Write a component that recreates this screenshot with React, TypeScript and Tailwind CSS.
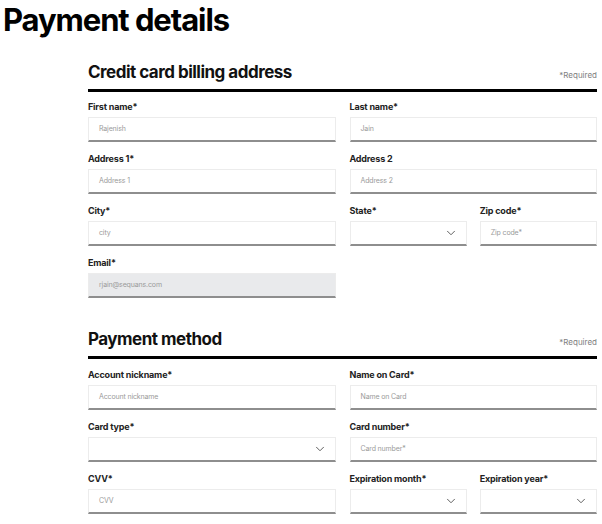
import { ChevronDown } from 'lucide-react'

type Field = {
  label: string
  placeholder?: string
  select?: boolean
  filled?: boolean
}

function FieldBox({ label, placeholder, select, filled }: Field) {
  return (
    <div className="flex flex-col">
      <label className="text-[9px] leading-[12px] font-bold text-[#222] tracking-[-0.02em]">{label}</label>
      <div
        className={
          'mt-[4px] h-[25px] flex items-center justify-between px-[10px] border border-[#ececec] border-b-[2px] border-b-[#8e8e8e] ' +
          (filled ? 'bg-[#e9eaec]' : 'bg-white')
        }
      >
        <span className="text-[7px] text-[#9a9a9a] tracking-[-0.02em]">{placeholder}</span>
        {select && <ChevronDown className="w-[14px] h-[14px] text-[#555] -mr-[2px]" strokeWidth={1.6} />}
      </div>
    </div>
  )
}

function SectionHeader({ title }: { title: string }) {
  return (
    <div className="flex items-end justify-between border-b-[3px] border-black pb-[7px]">
      <h2 className="text-[17px] leading-[20px] font-bold text-[#111] tracking-[-0.03em]">{title}</h2>
      <span className="text-[8px] leading-[10px] text-[#808080] mb-[2px]">*Required</span>
    </div>
  )
}

export default function App() {
  return (
    <div className="w-[602px] h-[524px] overflow-hidden bg-white font-['Inter',sans-serif]">
      <h1 className="pl-[3px] pt-[2px] text-[31px] leading-[36px] font-bold text-black tracking-[-0.035em]">
        Payment details
      </h1>

      <div className="ml-[88px] mr-[5px]">
        <div className="mt-[24px]">
          <SectionHeader title="Credit card billing address" />
          <div className="grid grid-cols-2 gap-x-[14px] gap-y-[11px] pt-[9px]">
            <FieldBox label="First name*" placeholder="Rajenish" />
            <FieldBox label="Last name*" placeholder="Jain" />
            <FieldBox label="Address 1*" placeholder="Address 1" />
            <FieldBox label="Address 2" placeholder="Address 2" />
            <FieldBox label="City*" placeholder="city" />
            <div className="grid grid-cols-2 gap-x-[13px]">
              <FieldBox label="State*" select />
              <FieldBox label="Zip code*" placeholder="Zip code*" />
            </div>
            <FieldBox label="Email*" placeholder="rjain@sequans.com" filled />
          </div>
        </div>

        <div className="mt-[31px]">
          <SectionHeader title="Payment method" />
          <div className="grid grid-cols-2 gap-x-[14px] gap-y-[11px] pt-[10px]">
            <FieldBox label="Account nickname*" placeholder="Account nickname" />
            <FieldBox label="Name on Card*" placeholder="Name on Card" />
            <FieldBox label="Card type*" select />
            <FieldBox label="Card number*" placeholder="Card number*" />
            <FieldBox label="CVV*" placeholder="CVV" />
            <div className="grid grid-cols-2 gap-x-[13px]">
              <FieldBox label="Expiration month*" select />
              <FieldBox label="Expiration year*" select />
            </div>
          </div>
        </div>
      </div>
    </div>
  )
}
